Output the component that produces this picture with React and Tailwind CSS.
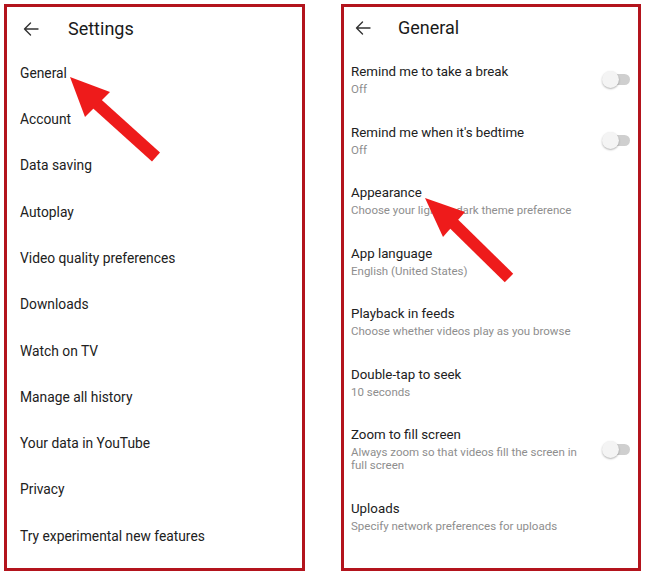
import React from "react";

const font = { fontFamily: "Roboto, 'Noto Sans', Arial, sans-serif" };

function BackArrow() {
  return (
    <svg width="16" height="14" viewBox="0 0 16 14" fill="none" stroke="#333" strokeWidth="1.4" strokeLinecap="round" strokeLinejoin="round">
      <path d="M15 7H1.5M7.5 1L1.5 7l6 6" />
    </svg>
  );
}

function Toggle() {
  return (
    <div className="relative w-[28px] h-[17px] shrink-0">
      <div className="absolute left-[3px] right-0 top-[3px] h-[11px] rounded-full bg-[#cfcfcf]" />
      <div className="absolute left-0 top-0 w-[17px] h-[17px] rounded-full bg-[#f4f4f4] shadow-[0_1px_2px_rgba(0,0,0,0.3)]" />
    </div>
  );
}

const leftItems = [
  "General",
  "Account",
  "Data saving",
  "Autoplay",
  "Video quality preferences",
  "Downloads",
  "Watch on TV",
  "Manage all history",
  "Your data in YouTube",
  "Privacy",
  "Try experimental new features",
];

const rightItems = [
  { t: "Remind me to take a break", s: "Off", toggle: true },
  { t: "Remind me when it's bedtime", s: "Off", toggle: true },
  { t: "Appearance", s: "Choose your light or dark theme preference" },
  { t: "App language", s: "English (United States)" },
  { t: "Playback in feeds", s: "Choose whether videos play as you browse" },
  { t: "Double-tap to seek", s: "10 seconds" },
  { t: "Zoom to fill screen", s: "Always zoom so that videos fill the screen in full screen", toggle: true },
  { t: "Uploads", s: "Specify network preferences for uploads" },
];

export default function App() {
  return (
    <div className="relative w-[647px] h-[578px] bg-white overflow-hidden" style={font}>
      <div className="flex gap-[36px] pl-[4px] pt-[4px]">
        {/* Left panel */}
        <div className="w-[301px] h-[567px] border-[3px] border-[#b3141d] bg-white">
          <div className="h-[43px] flex items-center">
            <div className="ml-[16px] w-[16px] flex items-center"><BackArrow /></div>
            <div className="ml-[29px] text-[18px] text-[#1a1a1a] leading-none">Settings</div>
          </div>
          <div className="flex flex-col">
            {leftItems.map((it) => (
              <div key={it} className="h-[46.3px] flex items-center pl-[13px] text-[13.8px] text-[#212121]">
                {it}
              </div>
            ))}
          </div>
        </div>

        {/* Right panel */}
        <div className="w-[300px] h-[567px] border-[3px] border-[#b3141d] bg-white">
          <div className="h-[42.5px] flex items-center">
            <div className="ml-[11px] w-[16px] flex items-center"><BackArrow /></div>
            <div className="ml-[27px] text-[18px] text-[#1a1a1a] leading-none">General</div>
          </div>
          <div className="flex flex-col">
            {rightItems.map((it) => (
              <div key={it.t} className="flex items-center py-[13.75px] pl-[7px] pr-[8px]">
                <div className="flex-1 flex flex-col pr-[20px]">
                  <div className="text-[13.3px] leading-[18px] text-[#212121]">{it.t}</div>
                  <div className="text-[11.5px] leading-[13px] text-[#8e8e8e] mt-[2px]">{it.s}</div>
                </div>
                {it.toggle && <Toggle />}
              </div>
            ))}
          </div>
        </div>
      </div>

      {/* Red arrows overlay */}
      <svg className="absolute left-0 top-0" width="647" height="578" viewBox="0 0 647 578">
        <line x1="95" y1="102" x2="156" y2="157" stroke="#ee1b1b" strokeWidth="12" />
        <polygon points="70,77 110,92 85,117" fill="#ee1b1b" />
        <line x1="452" y1="222" x2="509" y2="278" stroke="#ee1b1b" strokeWidth="12" />
        <polygon points="425,198 465,212 443,237" fill="#ee1b1b" />
      </svg>
    </div>
  );
}
